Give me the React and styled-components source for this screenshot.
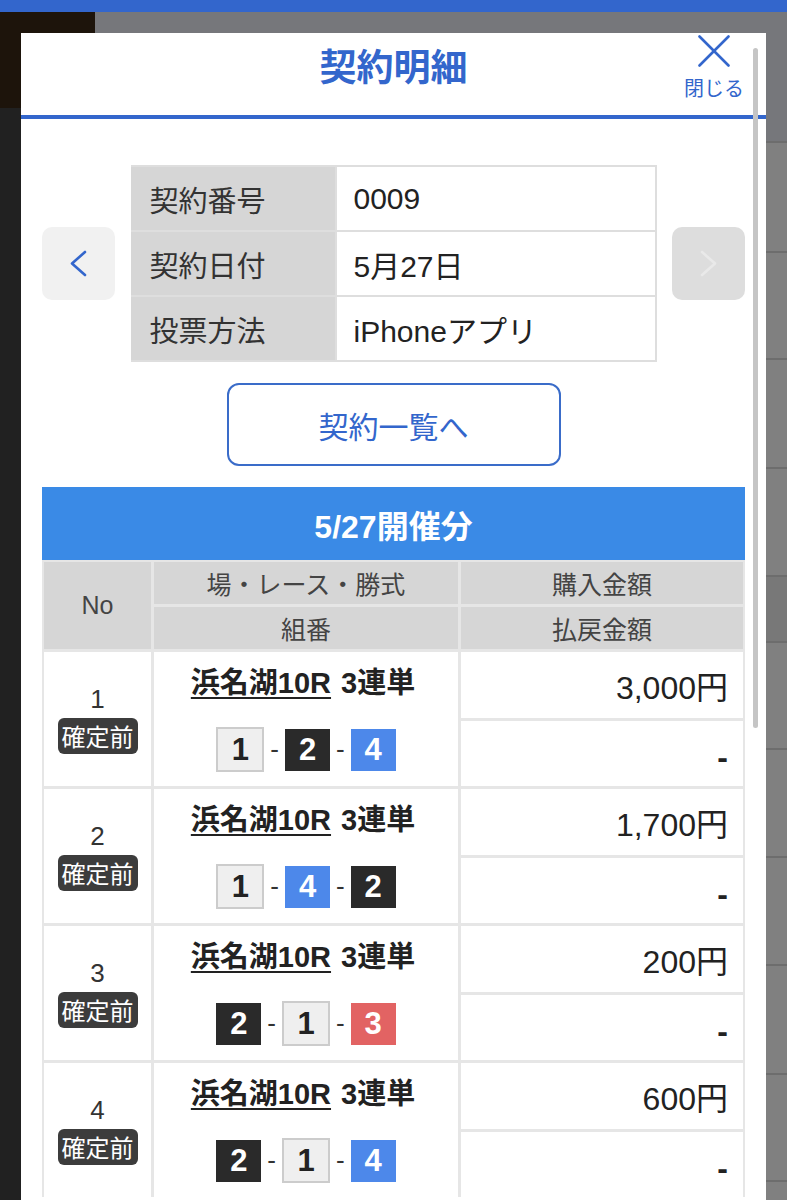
import styled, { createGlobalStyle } from "styled-components";

const GlobalStyle = createGlobalStyle`
  html, body {
    margin: 0;
    padding: 0;
    background: #212121;
    overflow: hidden;
  }
  body {
    font-family: "Liberation Sans", "Noto Sans CJK JP", sans-serif;
  }
  * { box-sizing: border-box; }
`;

const BLUE = "#3366cc";

const Page = styled.div`
  width: 787px;
  height: 1200px;
  overflow: hidden;
  display: grid;
  grid-template-columns: 21px 745px 1fr;
  grid-template-rows: 12px 21px 1fr;
`;

const TopBar = styled.div`
  grid-column: 1 / -1;
  background: ${BLUE};
`;

const LeftEdge = styled.div`
  grid-column: 1;
  grid-row: 2 / 4;
  background: linear-gradient(#1d140b 0 96px, #212121 96px);
`;

const Band = styled.div`
  grid-column: 2;
  grid-row: 2;
  background: linear-gradient(to right, #1d140b 74px, #76777b 74px);
`;

const RightEdge = styled.div`
  grid-column: 3;
  grid-row: 2 / 4;
  display: flex;
  flex-direction: column;
  overflow: hidden;
`;

const Stripe = styled.div`
  flex: none;
  height: ${(p) => p.$h}px;
  background: ${(p) => p.$tone};
  border-bottom: 2px solid #6d6d6d;
`;

const Modal = styled.div`
  grid-column: 2;
  grid-row: 3;
  background: #fff;
  position: relative;
  display: flex;
  flex-direction: column;
  overflow: hidden;
`;

const Scrollbar = styled.div`
  position: absolute;
  right: 8px;
  top: 15px;
  width: 5px;
  height: 680px;
  border-radius: 3px;
  background: #c5c5c5;
`;

const Header = styled.header`
  flex: none;
  height: 86px;
  border-bottom: 4px solid ${BLUE};
  display: grid;
  grid-template-columns: 1fr auto 1fr;
  align-items: start;
`;

const Title = styled.h1`
  grid-column: 2;
  margin: 10px 0 0;
  font-size: 37px;
  line-height: 44px;
  font-weight: 700;
  color: ${BLUE};
  font-family: "Noto Sans CJK JP", sans-serif;
`;

const CloseButton = styled.button`
  grid-column: 3;
  justify-self: end;
  margin-right: 22px;
  padding: 2px 0 0;
  border: none;
  background: none;
  display: flex;
  flex-direction: column;
  align-items: center;
  color: ${BLUE};
  font-family: "Noto Sans CJK JP", sans-serif;
  font-size: 20px;
  line-height: 24px;
  gap: 9px;
`;

const Content = styled.div`
  padding: 46px 21px 0;
  display: flex;
  flex-direction: column;
`;

const InfoRow = styled.div`
  display: flex;
  align-items: center;
  justify-content: space-between;
`;

const NavButton = styled.button`
  width: 73px;
  height: 73px;
  border: none;
  border-radius: 10px;
  background: ${(p) => (p.$disabled ? "#dddddd" : "#f1f1f1")};
  display: flex;
  align-items: center;
  justify-content: center;
  padding: 0;
`;

const InfoTable = styled.div`
  width: 526px;
  display: grid;
  grid-template-columns: 204px 1fr;
  grid-auto-rows: 63px;
  gap: 2px;
  padding: 2px 2px 2px 0;
  background: #dedede;
`;

const InfoLabel = styled.div`
  background: #d6d6d6;
  color: #333;
  font-size: 29px;
  display: flex;
  align-items: center;
  padding-left: 19px;
`;

const InfoValue = styled.div`
  background: #fff;
  color: #222;
  font-size: 30px;
  display: flex;
  align-items: center;
  padding-left: 17px;
`;

const ListButton = styled.button`
  margin: 21px auto 0;
  width: 334px;
  height: 83px;
  border: 2px solid #3a6cc9;
  border-radius: 12px;
  background: #fff;
  color: ${BLUE};
  font-family: "Noto Sans CJK JP", sans-serif;
  font-size: 30px;
  font-weight: 400;
`;

const DayHeader = styled.div`
  margin-top: 21px;
  height: 73px;
  background: #3a8ae6;
  color: #fff;
  font-size: 32px;
  font-weight: 700;
  display: flex;
  align-items: center;
  justify-content: center;
`;

const Results = styled.div`
  display: grid;
  grid-template-columns: 107px 304px 1fr;
  grid-template-rows: 42px 42px;
  grid-auto-rows: 66px 65px;
  gap: 3px;
  padding: 2px 2px 0;
  background: #e6e6e6;
`;

const HeadCell = styled.div`
  background: #d6d6d6;
  color: #444;
  font-size: 25px;
  display: flex;
  align-items: center;
  justify-content: center;
  grid-row: ${(p) => p.$rows || "auto"};
`;

const NoCell = styled.div`
  grid-row: span 2;
  background: #fff;
  display: flex;
  flex-direction: column;
  align-items: center;
  justify-content: center;
  gap: 4px;
`;

const NoNumber = styled.div`
  font-size: 26px;
  line-height: 30px;
  color: #333;
`;

const Badge = styled.span`
  height: 36px;
  padding: 0 4px;
  border-radius: 6px;
  background: #3c3c3c;
  color: #fff;
  font-family: "Noto Sans CJK JP", sans-serif;
  font-size: 24px;
  line-height: 36px;
`;

const BetCell = styled.div`
  grid-row: span 2;
  background: #fff;
  display: flex;
  flex-direction: column;
  align-items: center;
  justify-content: center;
  gap: 27px;
`;

const BetTitle = styled.div`
  font-size: 29px;
  line-height: 34px;
  font-weight: 700;
  color: #222;
  white-space: nowrap;
  padding-right: 6px;
`;

const Venue = styled.a`
  color: #222;
  text-decoration: underline;
  text-decoration-thickness: 2px;
  text-underline-offset: 4px;
  margin-right: 10px;
`;

const Combo = styled.div`
  display: flex;
  align-items: center;
`;

const BOAT = {
  1: { bg: "#efefef", fg: "#222", border: "#cccccc" },
  2: { bg: "#2a2a2a", fg: "#fff" },
  3: { bg: "#e26363", fg: "#fff" },
  4: { bg: "#4d88ea", fg: "#fff" },
};

const Boat = styled.span`
  width: ${(p) => (BOAT[p.$n].border ? 48 : 45)}px;
  height: ${(p) => (BOAT[p.$n].border ? 45 : 42)}px;
  background: ${(p) => BOAT[p.$n].bg};
  color: ${(p) => BOAT[p.$n].fg};
  border: ${(p) => (BOAT[p.$n].border ? `2px solid ${BOAT[p.$n].border}` : "none")};
  display: flex;
  align-items: center;
  justify-content: center;
  font-size: 31px;
  font-weight: 700;
`;

const Dash = styled.span`
  margin: 0 6px;
  font-size: 26px;
  color: #333;
`;

const AmountCell = styled.div`
  background: #fff;
  display: flex;
  align-items: center;
  justify-content: flex-end;
  padding-right: 15px;
  font-size: 32px;
  font-weight: ${(p) => (p.$dash ? 700 : 400)};
  color: #222;
  padding-top: ${(p) => (p.$dash ? 8 : 0)}px;
`;

const stripes = [
  { h: 131, tone: "#76777b" },
  { h: 110, tone: "#808080" },
  { h: 107, tone: "#808080" },
  { h: 109, tone: "#808080" },
  { h: 108, tone: "#808080" },
  { h: 66, tone: "#787878" },
  { h: 107, tone: "#808080" },
  { h: 108, tone: "#808080" },
  { h: 108, tone: "#808080" },
  { h: 109, tone: "#808080" },
  { h: 107, tone: "#808080" },
  { h: 40, tone: "#808080" },
];

const info = [
  ["契約番号", "0009"],
  ["契約日付", "5月27日"],
  ["投票方法", "iPhoneアプリ"],
];

const bets = [
  { no: 1, combo: [1, 2, 4], amount: "3,000円" },
  { no: 2, combo: [1, 4, 2], amount: "1,700円" },
  { no: 3, combo: [2, 1, 3], amount: "200円" },
  { no: 4, combo: [2, 1, 4], amount: "600円" },
];

const Chevron = ({ dir, color }) => (
  <svg width="19" height="27" viewBox="0 0 19 27" fill="none" stroke={color} strokeWidth="2.6" strokeLinecap="round" strokeLinejoin="round">
    {dir === "left" ? <polyline points="16,2 3,13.5 16,25" /> : <polyline points="3,2 16,13.5 3,25" />}
  </svg>
);

const CloseIcon = () => (
  <svg width="32" height="32" viewBox="0 0 32 32" stroke={BLUE} strokeWidth="2.6" strokeLinecap="round">
    <line x1="1.5" y1="1.5" x2="30.5" y2="30.5" />
    <line x1="30.5" y1="1.5" x2="1.5" y2="30.5" />
  </svg>
);

export default function App() {
  return (
    <>
      <GlobalStyle />
      <Page>
        <TopBar />
        <LeftEdge />
        <Band />
        <RightEdge>
          {stripes.map((s, i) => (
            <Stripe key={i} $h={s.h} $tone={s.tone} />
          ))}
        </RightEdge>
        <Modal>
          <Header>
            <Title>契約明細</Title>
            <CloseButton>
              <CloseIcon />
              閉じる
            </CloseButton>
          </Header>
          <Content>
            <InfoRow>
              <NavButton>
                <Chevron dir="left" color={BLUE} />
              </NavButton>
              <InfoTable>
                {info.map(([k, v]) => (
                  <>
                    <InfoLabel key={k}>{k}</InfoLabel>
                    <InfoValue key={k + "v"}>{v}</InfoValue>
                  </>
                ))}
              </InfoTable>
              <NavButton $disabled>
                <Chevron dir="right" color="#e9e9e9" />
              </NavButton>
            </InfoRow>
            <ListButton>契約一覧へ</ListButton>
            <DayHeader>5/27開催分</DayHeader>
            <Results>
              <HeadCell $rows="span 2">No</HeadCell>
              <HeadCell>場・レース・勝式</HeadCell>
              <HeadCell>購入金額</HeadCell>
              <HeadCell>組番</HeadCell>
              <HeadCell>払戻金額</HeadCell>
              {bets.map((b) => (
                <>
                  <NoCell key={b.no}>
                    <NoNumber>{b.no}</NoNumber>
                    <Badge>確定前</Badge>
                  </NoCell>
                  <BetCell key={b.no + "b"}>
                    <BetTitle>
                      <Venue>浜名湖10R</Venue>3連単
                    </BetTitle>
                    <Combo>
                      {b.combo.map((n, i) => (
                        <>
                          {i > 0 && <Dash>-</Dash>}
                          <Boat $n={n}>{n}</Boat>
                        </>
                      ))}
                    </Combo>
                  </BetCell>
                  <AmountCell key={b.no + "a"}>{b.amount}</AmountCell>
                  <AmountCell key={b.no + "p"} $dash>-</AmountCell>
                </>
              ))}
            </Results>
          </Content>
          <Scrollbar />
        </Modal>
      </Page>
    </>
  );
}
